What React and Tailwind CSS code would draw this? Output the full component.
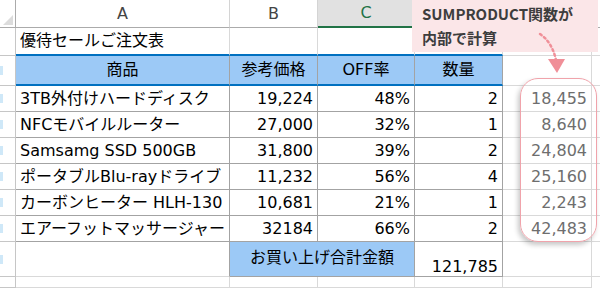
import * as React from "react";

const rows = [
  { name: "3TB外付けハードディスク", price: "19,224", off: "48%", qty: "2", total: "18,455" },
  { name: "NFCモバイルルーター", price: "27,000", off: "32%", qty: "1", total: "8,640" },
  { name: "Samsamg SSD 500GB", price: "31,800", off: "39%", qty: "2", total: "24,804" },
  { name: "ポータブルBlu-rayドライブ", price: "11,232", off: "56%", qty: "4", total: "25,160" },
  { name: "カーボンヒーター HLH-130", price: "10,681", off: "21%", qty: "1", total: "2,243" },
  { name: "エアーフットマッサージャー", price: "32184", off: "66%", qty: "2", total: "42,483" },
];

const grid = "border-r border-b border-[#d9d9d9]";
const line = "border-r border-b border-[#a3a3a3]";

// row number column is cut off at the left edge, only a sliver shows
const RowHead = ({ blue }) => (
  <div className="border-r border-b border-[#c6c6c6] flex items-center">
    <span className={"w-[3px] h-[9px] " + (blue ? "bg-[#cfe8f8]" : "")} />
  </div>
);

const App = () => {
  return (
    <div className="relative w-[600px] h-[288px] overflow-hidden bg-white text-[16px] text-black font-['DejaVu_Sans','Noto_Sans_CJK_JP',sans-serif]">
      <div className="grid grid-cols-[16px_214px_88px_97px_88px_89px_1fr] grid-rows-[28px_28px_30px_26px_26px_26px_26px_26px_26px_35px_1fr] h-full">
        {/* column headers */}
        <div className="border-r border-b border-[#ababab] bg-white flex items-end justify-end p-[2px]">
          <div className="w-0 h-0 border-l-[10px] border-l-transparent border-b-[10px] border-b-[#dcdcdc]" />
        </div>
        <div className="border-r border-b border-[#d4d4d4] border-b-[#ababab] flex items-center justify-center text-[#444]">A</div>
        <div className="border-r border-b border-[#d4d4d4] border-b-[#ababab] flex items-center justify-center text-[#444]">B</div>
        <div className="border-r border-[#d4d4d4] border-b-2 border-b-[#217346] bg-[#e1e1e1] flex items-center justify-center text-[#217346]">C</div>
        <div className="border-r border-b border-[#d4d4d4] border-b-[#ababab]" />
        <div className="border-r border-b border-[#d4d4d4] border-b-[#ababab]" />
        <div className="border-b border-[#ababab]" />

        {/* row 1 */}
        <RowHead />
        <div className="border-r border-[#d9d9d9] border-b-2 border-b-[#0070c0] flex items-center pl-[4px]">優待セールご注文表</div>
        <div className="border-r border-[#d9d9d9] border-b-2 border-b-[#0070c0]" />
        <div className="border-r border-[#d9d9d9] border-b-2 border-b-[#0070c0]" />
        <div className="border-r border-[#d9d9d9] border-b-2 border-b-[#0070c0]" />
        <div className={grid} />
        <div className="border-b border-[#d9d9d9]" />

        {/* row 2 header */}
        <RowHead blue />
        <div className="bg-[#9cc9f6] border-r border-[#a3a3a3] border-b-2 border-b-[#0070c0] flex items-center justify-center">商品</div>
        <div className="bg-[#9cc9f6] border-r border-[#a3a3a3] border-b-2 border-b-[#0070c0] flex items-center justify-center">参考価格</div>
        <div className="bg-[#9cc9f6] border-r border-[#a3a3a3] border-b-2 border-b-[#0070c0] flex items-center justify-center">OFF率</div>
        <div className="bg-[#9cc9f6] border-r border-[#a3a3a3] border-b-2 border-b-[#0070c0] flex items-center justify-center">数量</div>
        <div className={grid} />
        <div className="border-b border-[#d9d9d9]" />

        {rows.map((r) => (
          <React.Fragment key={r.name}>
            <RowHead blue />
            <div className={line + " flex items-center pl-[4px] whitespace-nowrap overflow-hidden"}>{r.name}</div>
            <div className={line + " flex items-center justify-end pr-[4px]"}>{r.price}</div>
            <div className={line + " flex items-center justify-end pr-[4px]"}>{r.off}</div>
            <div className={line + " flex items-center justify-end pr-[4px]"}>{r.qty}</div>
            <div className={grid + " flex items-center justify-end pr-[4px] text-[#6e6e6e]"}>{r.total}</div>
            <div className="border-b border-[#d9d9d9]" />
          </React.Fragment>
        ))}

        {/* total row */}
        <RowHead blue />
        <div className="border-r border-b border-[#a3a3a3] border-b-[#d9d9d9]" />
        <div className="col-span-2 bg-[#9cc9f6] border-r border-b border-[#a3a3a3] flex items-start justify-center pt-[4px]">お買い上げ合計金額</div>
        <div className={line + " flex items-end justify-end pr-[4px] leading-[16px] pb-[1px]"}>121,785</div>
        <div className={grid} />
        <div className="border-b border-[#d9d9d9]" />

        {/* row 10 */}
        <RowHead />
        <div className={grid} />
        <div className={grid} />
        <div className={grid} />
        <div className={grid} />
        <div className={grid} />
        <div />
      </div>

      {/* callout */}
      <div className="absolute left-[412px] top-0 w-[186px] h-[52px] bg-[#fbe6e8] font-['Noto_Sans_CJK_JP',sans-serif] font-bold text-[15px] leading-[24px] text-[#3d3d3d] pl-[10px] pt-[2px]">
        <div>SUMPRODUCT関数が</div>
        <div>内部で計算</div>
      </div>

      {/* arrow */}
      <svg className="absolute left-[530px] top-[28px]" width="40" height="50" viewBox="0 0 40 50">
        <path d="M10 6 Q22 14 26 32" fill="none" stroke="#f08f98" strokeWidth="2.5" strokeDasharray="2 3" strokeLinecap="round" />
        <path d="M18 31 L35 31 L27 45 Z" fill="#f08f98" />
      </svg>

      {/* rounded frame */}
      <div className="absolute left-[520px] top-[78px] w-[77px] h-[164px] rounded-[18px] border-[1.5px] border-[#f0a3ab] shadow-[-2px_3px_5px_rgba(0,0,0,0.22)]" />
    </div>
  );
};

export default App;
